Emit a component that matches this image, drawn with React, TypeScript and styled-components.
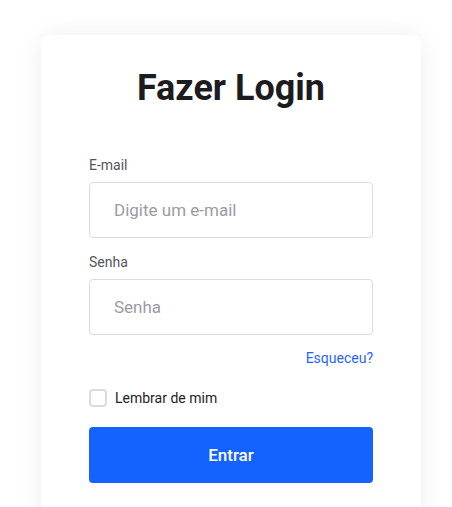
import { useState } from "react";
import styled, { createGlobalStyle } from "styled-components";

const GlobalStyle = createGlobalStyle`
    * {
        box-sizing: border-box;
    }
    body {
        margin: 0;
        background: #ffffff;
        font-family: Roboto, "Liberation Sans", Arial, sans-serif;
    }
`;

const Page = styled.div`
    padding: 35px 0 40px 41px;
`;

const Card = styled.div`
    width: 380px;
    padding: 32px 48px 40px;
    background: #ffffff;
    border-radius: 8px;
    box-shadow: 0 0 24px rgba(0, 0, 0, 0.07);
`;

const Title = styled.h1`
    margin: 0 0 48px;
    font-size: 36px;
    line-height: 42px;
    font-weight: 700;
    color: #1c1c1f;
    text-align: center;
`;

const Field = styled.div`
    display: flex;
    flex-direction: column;
    gap: 9px;
    margin-bottom: 16px;
`;

const Label = styled.label`
    font-size: 14px;
    line-height: 16px;
    color: #55555d;
`;

const Input = styled.input`
    width: 100%;
    height: 56px;
    padding: 0 24px;
    border: 1px solid #dcdce0;
    border-radius: 4px;
    font-family: inherit;
    font-size: 17px;
    color: #1c1c1f;
    outline: none;

    &::placeholder {
        color: #9b9ba4;
    }
`;

const ForgotRow = styled.div`
    display: flex;
    justify-content: flex-end;
    margin-top: -1px;
`;

const Link = styled.a`
    font-size: 14px;
    line-height: 16px;
    color: #1f66ff;
    text-decoration: none;
    cursor: pointer;
`;

const RememberRow = styled.label`
    display: flex;
    align-items: center;
    gap: 8px;
    margin-top: 23px;
    font-size: 14px;
    color: #232327;
    cursor: pointer;
`;

const Box = styled.span<{ checked: boolean }>`
    width: 18px;
    height: 18px;
    border: 2px solid ${(p) => (p.checked ? "#1463ff" : "#dcdce0")};
    background: ${(p) => (p.checked ? "#1463ff" : "#ffffff")};
    border-radius: 4px;
    display: flex;
    align-items: center;
    justify-content: center;
`;

const SubmitButton = styled.button`
    width: 100%;
    height: 56px;
    margin-top: 20px;
    border: none;
    border-radius: 4px;
    background: #1463ff;
    color: #ffffff;
    font-family: inherit;
    font-size: 17px;
    font-weight: 500;
    cursor: pointer;
`;

const Divider = styled.p`
    margin: 19px 0 0;
    font-size: 14px;
    line-height: 16px;
    color: #9b9ba4;
    text-align: center;
`;

const App = () => {
    const [remember, setRemember] = useState(false);

    return (
        <>
            <GlobalStyle />
            <Page>
                <Card>
                    <Title>Fazer Login</Title>
                    <Field>
                        <Label>E-mail</Label>
                        <Input type="email" placeholder="Digite um e-mail" />
                    </Field>
                    <Field>
                        <Label>Senha</Label>
                        <Input type="password" placeholder="Senha" />
                    </Field>
                    <ForgotRow>
                        <Link>Esqueceu?</Link>
                    </ForgotRow>
                    <RememberRow onClick={() => setRemember(!remember)}>
                        <Box checked={remember}>
                            {remember && (
                                <svg width="10" height="10" viewBox="0 0 10 10">
                                    <path d="M1.5 5.2 4 7.5 8.5 2.5" stroke="#fff" strokeWidth="1.8" fill="none" />
                                </svg>
                            )}
                        </Box>
                        Lembrar de mim
                    </RememberRow>
                    <SubmitButton>Entrar</SubmitButton>
                    <Divider>ou</Divider>
                </Card>
            </Page>
        </>
    );
};

export default App;
